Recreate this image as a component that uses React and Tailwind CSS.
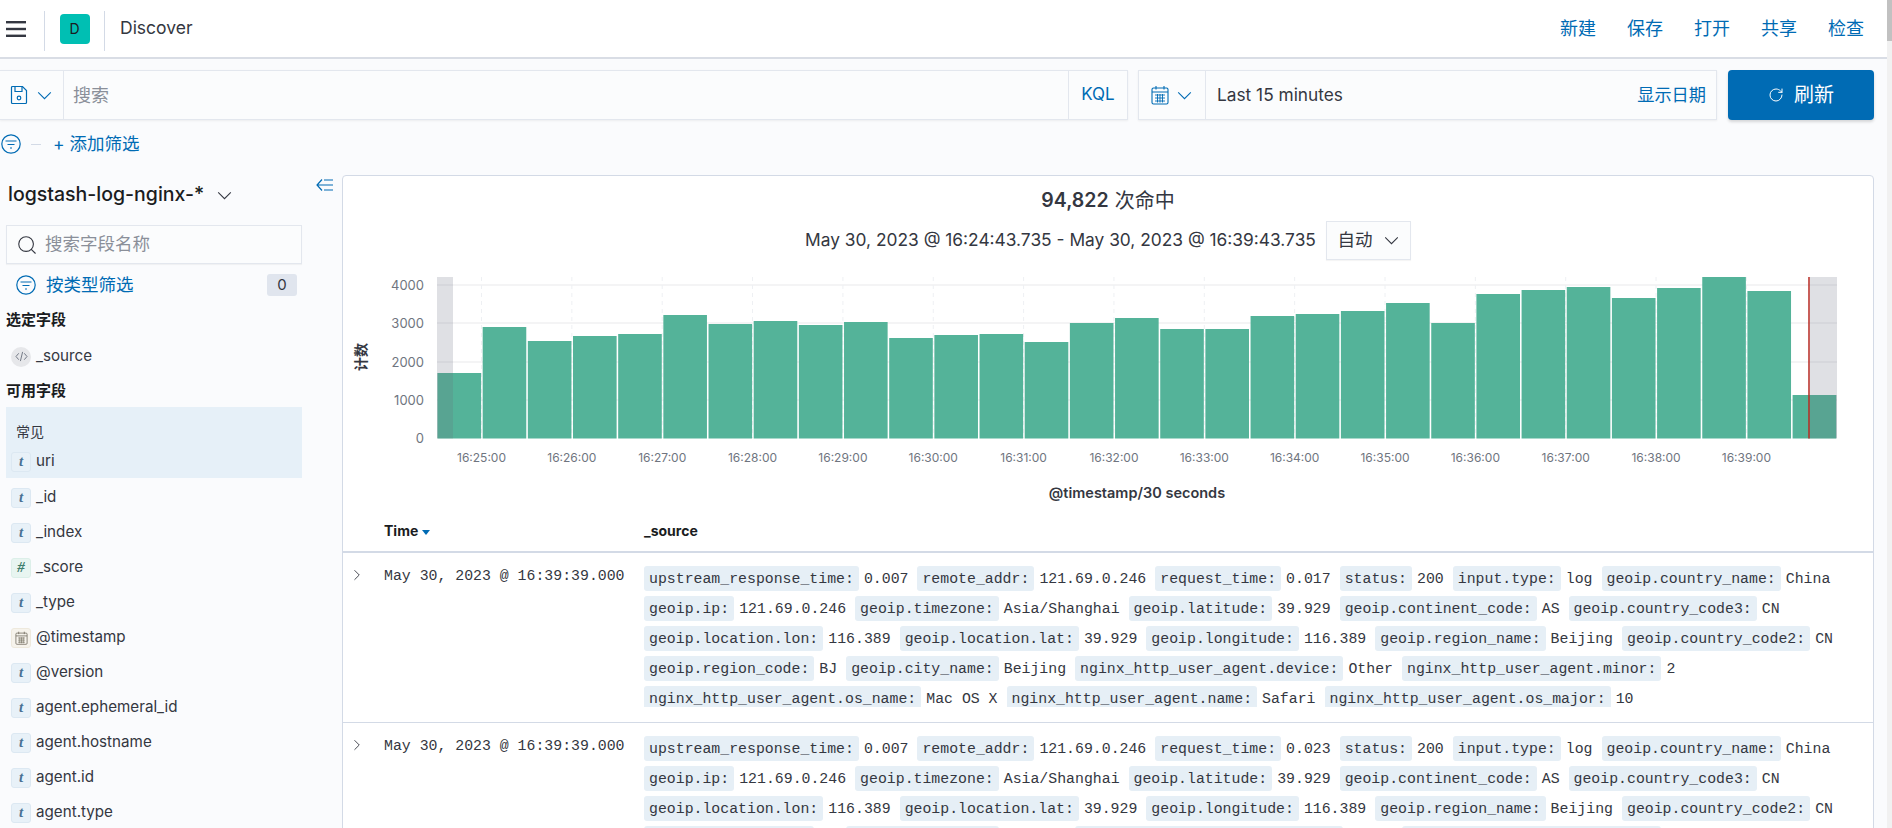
import { ChevronRight, RotateCw, Search } from 'lucide-react'

const SANS = { fontFamily: 'Inter, "Noto Sans CJK SC", sans-serif' }

const TOPS = [
  373, 327, 341, 336, 334, 315, 324, 321, 325, 322, 338, 335, 334, 342, 323,
  318, 329, 329, 316, 314, 311, 303, 323, 294, 290, 287, 298, 288, 277, 291, 395,
]
const TICKS = ['16:25:00', '16:26:00', '16:27:00', '16:28:00', '16:29:00', '16:30:00', '16:31:00', '16:32:00',
  '16:33:00', '16:34:00', '16:35:00', '16:36:00', '16:37:00', '16:38:00', '16:39:00']

const FIELDS = [
  ['_id', 't'], ['_index', 't'], ['_score', '#'], ['_type', 't'], ['@timestamp', 'date'], ['@version', 't'],
  ['agent.ephemeral_id', 't'], ['agent.hostname', 't'], ['agent.id', 't'], ['agent.type', 't'],
]

function hit(requestTime) {
  return [
    ['upstream_response_time', '0.007'], ['remote_addr', '121.69.0.246'], ['request_time', requestTime],
    ['status', '200'], ['input.type', 'log'], ['geoip.country_name', 'China'], ['geoip.ip', '121.69.0.246'],
    ['geoip.timezone', 'Asia/Shanghai'], ['geoip.latitude', '39.929'], ['geoip.continent_code', 'AS'],
    ['geoip.country_code3', 'CN'], ['geoip.location.lon', '116.389'], ['geoip.location.lat', '39.929'],
    ['geoip.longitude', '116.389'], ['geoip.region_name', 'Beijing'], ['geoip.country_code2', 'CN'],
    ['geoip.region_code', 'BJ'], ['geoip.city_name', 'Beijing'], ['nginx_http_user_agent.device', 'Other'],
    ['nginx_http_user_agent.minor', '2'], ['nginx_http_user_agent.os_name', 'Mac OS X'],
    ['nginx_http_user_agent.name', 'Safari'], ['nginx_http_user_agent.os_major', '10'],
  ]
}

function Chevron({ className }) {
  return (
    <svg viewBox="0 0 16 10" fill="none" stroke="currentColor" strokeWidth="1.2" className={`w-[15px] h-[9px] shrink-0 ${className}`}>
      <path d="M1 1.5 8 8.5l7-7" />
    </svg>
  )
}

function FilterIcon({ className }) {
  return (
    <svg viewBox="0 0 20 20" fill="none" stroke="currentColor" strokeWidth="1.2" className={className}>
      <circle cx="10" cy="10" r="9.2" />
      <path d="M4.5 7h11M6.5 10.5h7M9 14h2" />
    </svg>
  )
}

function SaveIcon() {
  return (
    <svg viewBox="0 0 18 20" fill="none" stroke="currentColor" strokeWidth="1.2" className="w-[18px] h-[20px] shrink-0 text-[#006bb4]">
      <path d="M1.5 2.5a1 1 0 0 1 1-1h10l4 4v12a1 1 0 0 1-1 1h-13a1 1 0 0 1-1-1z" />
      <path d="M5 1.5v5h7v-5" />
      <circle cx="9" cy="13" r="1.8" />
    </svg>
  )
}

function CalendarIcon({ className }) {
  return (
    <svg viewBox="0 0 18 20" fill="none" stroke="currentColor" strokeWidth="1.1" className={className}>
      <rect x="1" y="3" width="16" height="16" rx="1.5" />
      <path d="M1 7h16M5 1v3.5M13 1v3.5" />
      <path d="M4 10h10M4 13h10M4 16h10M6.5 9v8.5M9 9v8.5M11.5 9v8.5" strokeWidth="0.9" />
    </svg>
  )
}

function CollapseIcon() {
  return (
    <svg viewBox="0 0 18 14" fill="none" stroke="#006bb4" strokeWidth="1.2" className="w-[18px] h-[14px]">
      <path d="M6 1.5 1 7l5 5.5M1 7h16M8 2h9M8 12h9" />
    </svg>
  )
}

function TypeTile({ type }) {
  if (type === 'date') {
    return (
      <span className="w-[20px] h-[20px] rounded-[3px] bg-[#f6f3ec] border border-[#eee9dd] flex items-center justify-center shrink-0">
        <CalendarIcon className="w-[13px] h-[14px] text-[#6f6a5c]" />
      </span>
    )
  }
  const isNumber = type === '#'
  return (
    <span
      className={`w-[20px] h-[20px] rounded-[3px] border flex items-center justify-center shrink-0 text-[15px] font-bold italic ${
        isNumber ? 'bg-[#e8f5f1] border-[#dcefe9] text-[#3f7f6e]' : 'bg-[#e8f1f8] border-[#dce8f2] text-[#4a7194]'
      }`}
      style={{ fontFamily: '"Liberation Serif", serif' }}
    >
      {type}
    </span>
  )
}

function FieldRow({ name, type }) {
  return (
    <div className="h-[35px] flex items-center gap-[5px] pl-[11px] text-[15.2px] text-[#343741]">
      <TypeTile type={type} />
      <span>{name}</span>
    </div>
  )
}

function Sidebar() {
  return (
    <div className="w-[342px] shrink-0 relative">
      <div className="h-[40px] flex items-center pl-[8px] text-[19.5px] font-medium text-[#1a1c21]">
        logstash-log-nginx-*
        <Chevron className="ml-[13px] text-[#343741]" />
      </div>
      <div className="absolute left-[316px] top-[3px]">
        <CollapseIcon />
      </div>
      <div className="mt-[10px] ml-[6px] w-[296px] h-[39px] border border-[#e3e7ee] bg-[#fbfcfd] flex items-center pl-[9px] gap-[7px] shadow-[0_1px_1px_rgba(0,0,0,0.04)]">
        <Search className="w-[22px] h-[22px] text-[#343741]" strokeWidth={1.2} />
        <span className="text-[17.5px] text-[#8a8f99]">搜索字段名称</span>
      </div>
      <div className="mt-[10px] ml-[16px] w-[281px] h-[22px] flex items-center justify-between">
        <div className="flex items-center gap-[10px] text-[#006bb4] text-[17.5px]">
          <FilterIcon className="w-[20px] h-[20px]" />
          按类型筛选
        </div>
        <span className="w-[30px] h-[22px] rounded-[3px] bg-[#e0e5ee] text-[15px] text-[#343741] flex items-center justify-center">0</span>
      </div>
      <div className="mt-[14px] pl-[6px] h-[20px] leading-[20px] text-[15px] font-bold text-[#1a1c21]">选定字段</div>
      <div className="mt-[9px] h-[35px] flex items-center gap-[5px] pl-[11px] text-[15.2px] text-[#343741]">
        <span className="w-[20px] h-[20px] rounded-full bg-[#e6e7ea] text-[#69707d] flex items-center justify-center shrink-0">
          <svg viewBox="0 0 14 12" fill="none" stroke="currentColor" strokeWidth="1" className="w-[13px] h-[11px]">
            <path d="M4 2.5 1 6l3 3.5M10 2.5 13 6l-3 3.5M8.2 1 5.8 11" />
          </svg>
        </span>
        _source
      </div>
      <div className="mt-[7px] pl-[6px] h-[20px] leading-[20px] text-[15px] font-bold text-[#1a1c21]">可用字段</div>
      <div className="mt-[6px] mb-[2px] ml-[6px] w-[296px] h-[71px] bg-[#e6f0f8] pt-[15px]">
        <div className="h-[20px] leading-[20px] pl-[10px] text-[14px] text-[#343741]">常见</div>
        <div className="-ml-[6px] mt-[2px]">
          <FieldRow name="uri" type="t" />
        </div>
      </div>
      {FIELDS.map(([name, type]) => (
        <FieldRow key={name} name={name} type={type} />
      ))}
    </div>
  )
}

function Histogram() {
  return (
    <svg viewBox="343 260 1530 250" className="w-[1530px] h-[250px] block" style={SANS}>
      <rect x="437" y="277" width="16" height="161" fill="#dfe0e4" />
      <rect x="1808" y="277" width="29" height="161" fill="#dfe0e4" />
      {[285, 323, 362, 400].map(y => (
        <line key={y} x1="437" x2="1837" y1={y} y2={y} stroke="#69707d" strokeOpacity="0.1" strokeWidth="1.5" />
      ))}
      {TICKS.map((t, i) => (
        <line key={t} x1={481.5 + i * 90.35} x2={481.5 + i * 90.35} y1="277" y2="438" stroke="#eef0f3" strokeDasharray="4 4" />
      ))}
      {TOPS.map((top, i) => (
        <rect key={i} x={437.5 + i * 45.17} y={top} width="43.6" height={438.5 - top} fill="#54b399" />
      ))}
      <rect x="437" y="373" width="16" height="65.5" fill="#69707d" fillOpacity="0.22" />
      <rect x="1808" y="395" width="29" height="43.5" fill="#69707d" fillOpacity="0.22" />
      <rect x="1808" y="277" width="2" height="161.5" fill="#bd271e" fillOpacity="0.7" />
      {[['4000', 285], ['3000', 323], ['2000', 362], ['1000', 400], ['0', 438]].map(([label, y]) => (
        <text key={label} x="424" y={y + 4.5} textAnchor="end" fontSize="13" fill="#6f7580">{label}</text>
      ))}
      {TICKS.map((t, i) => (
        <text key={t} x={481.5 + i * 90.35} y="461.5" textAnchor="middle" fontSize="12" fill="#6f7580">{t}</text>
      ))}
      <text x="1137" y="498" textAnchor="middle" fontSize="14.5" fontWeight="600" fill="#343741">@timestamp/30 seconds</text>
      <text x="0" y="0" transform="translate(366 357) rotate(-90)" textAnchor="middle" fontSize="14" fontWeight="700" fill="#343741">计数</text>
    </svg>
  )
}

function HitRow({ requestTime }) {
  return (
    <div className="flex border-b border-[#d3dae6] pt-[13px] pb-[15px] text-[#343741] text-[14.85px]" style={{ fontFamily: '"Liberation Mono", monospace' }}>
      <div className="w-[41px] shrink-0 pl-[5px] h-[18px] flex items-center">
        <ChevronRight className="w-[18px] h-[18px] text-[#343741]" strokeWidth={1.2} />
      </div>
      <div className="w-[260px] shrink-0 h-[20px] leading-[20px]">May 30, 2023 @ 16:39:39.000</div>
      <div className="flex-1 h-[141px] overflow-hidden flex flex-wrap content-start">
        {hit(requestTime).map(([key, value]) => (
          <div key={key} className="h-[30px] flex items-start mr-[9px] whitespace-nowrap">
            <span className="h-[25px] leading-[27px] px-[5px] rounded-[3px] bg-[#e6eff6]">{key}:</span>
            <span className="ml-[5px] h-[25px] leading-[26px]">{value}</span>
          </div>
        ))}
      </div>
    </div>
  )
}

function ResultsPanel() {
  return (
    <div className="flex-1 min-w-0 bg-white border border-[#d3dae6] rounded-[4px] h-[700px] overflow-hidden">
      <div className="h-[45px] pt-[5px] flex items-center justify-center gap-[6px] text-[19.5px] text-[#343741]">
        <span className="font-semibold">94,822</span>
        <span className="text-[20px]">次命中</span>
      </div>
      <div className="h-[39px] flex items-center justify-center gap-[10px] text-[17.35px] text-[#343741]">
        <span>May 30, 2023 @ 16:24:43.735 - May 30, 2023 @ 16:39:43.735</span>
        <div className="w-[85px] h-[39px] border border-[#e3e7ee] bg-[#fbfcfd] flex items-center justify-center gap-[12px] text-[17.5px] shadow-[0_1px_1px_rgba(0,0,0,0.04)]">
          自动
          <Chevron className="text-[#343741]" />
        </div>
      </div>
      <Histogram />
      <div className="h-[43px] flex items-center border-b-2 border-[#d3dae6] text-[14px] font-bold text-[#1a1c21]">
        <div className="w-[301px] pl-[41px] flex items-center gap-[4px]">
          Time
          <span className="mt-[3px] w-0 h-0 border-x-[4px] border-x-transparent border-t-[5px] border-t-[#006bb4]" />
        </div>
        <div>_source</div>
      </div>
      <HitRow requestTime="0.017" />
      <HitRow requestTime="0.023" />
    </div>
  )
}

export default function App() {
  return (
    <div className="flex h-[828px] w-full overflow-hidden bg-[#fafbfd]" style={SANS}>
      <div className="flex-1 min-w-0">
        <header className="h-[59px] bg-white border-b-2 border-[#d9dde5] flex items-center text-[#343741]">
          <div className="w-[45px] h-[40px] mt-[4px] flex items-center pl-[6px] border-r border-[#d3dae6]">
            <svg viewBox="0 0 20 16" className="w-[20px] h-[16px] -mt-[4px]" fill="#343741">
              <rect y="0" width="20" height="2.4" />
              <rect y="6.8" width="20" height="2.4" />
              <rect y="13.6" width="20" height="2.4" />
            </svg>
          </div>
          <div className="w-[60px] h-[40px] mt-[4px] flex items-center justify-center border-r border-[#d3dae6]">
            <span className="w-[30px] h-[30px] -mt-[4px] rounded-[4px] bg-[#00bfb3] text-[14px] text-[#1a1c21] flex items-center justify-center">D</span>
          </div>
          <span className="ml-[15px] text-[17.5px]">Discover</span>
          <nav className="ml-auto mr-[23px] flex gap-[31px] text-[18px] text-[#006bb4]">
            <span>新建</span>
            <span>保存</span>
            <span>打开</span>
            <span>共享</span>
            <span>检查</span>
          </nav>
        </header>

        <div className="mt-[11px] flex h-[50px] pr-[13px]">
          <div className="flex-1 min-w-0 flex border border-l-0 border-[#e3e7ee] bg-[#fbfcfd] shadow-[0_1px_2px_rgba(0,0,0,0.06)]">
            <div className="w-[64px] shrink-0 flex items-center pl-[10px] gap-[9px] border-r border-[#e3e7ee]">
              <SaveIcon />
              <Chevron className="text-[#006bb4]" />
            </div>
            <div className="flex-1 pl-[9px] flex items-center text-[18px] text-[#8a8f99]">搜索</div>
            <div className="w-[59px] shrink-0 flex items-center justify-center border-l border-[#e3e7ee] text-[17px] text-[#006bb4]">KQL</div>
          </div>
          <div className="ml-[10px] w-[579px] shrink-0 flex border border-[#e3e7ee] bg-[#fbfcfd] shadow-[0_1px_2px_rgba(0,0,0,0.06)]">
            <div className="w-[67px] shrink-0 flex items-center pl-[12px] gap-[8px] border-r border-[#e3e7ee]">
              <CalendarIcon className="w-[18px] h-[20px] shrink-0 text-[#006bb4]" />
              <Chevron className="text-[#006bb4]" />
            </div>
            <div className="flex-1 pl-[11px] flex items-center text-[17.3px] text-[#343741]">Last 15 minutes</div>
            <div className="pr-[10px] flex items-center text-[17.2px] text-[#006bb4]">显示日期</div>
          </div>
          <div className="ml-[11px] w-[146px] shrink-0 rounded-[4px] bg-[#006bb4] text-white flex items-center justify-center gap-[10px] text-[20px] shadow-[0_2px_3px_rgba(0,0,0,0.15)]">
            <RotateCw className="w-[16px] h-[16px]" strokeWidth={1.5} />
            刷新
          </div>
        </div>

        <div className="h-[48px] flex items-center pl-[1px] pr-[13px] text-[17.5px] text-[#006bb4]">
          <FilterIcon className="w-[20px] h-[20px]" />
          <span className="ml-[10px] w-[10px] h-px bg-[#d3dae6]" />
          <span className="ml-[12px]">+ 添加筛选</span>
        </div>

        <div className="mt-[7px] flex pr-[13px]">
          <Sidebar />
          <ResultsPanel />
        </div>
      </div>

      <div className="w-[5px] shrink-0 bg-[#f1f1f1]">
        <div className="h-[41px] bg-[#c1c1c1]" />
      </div>
    </div>
  )
}
